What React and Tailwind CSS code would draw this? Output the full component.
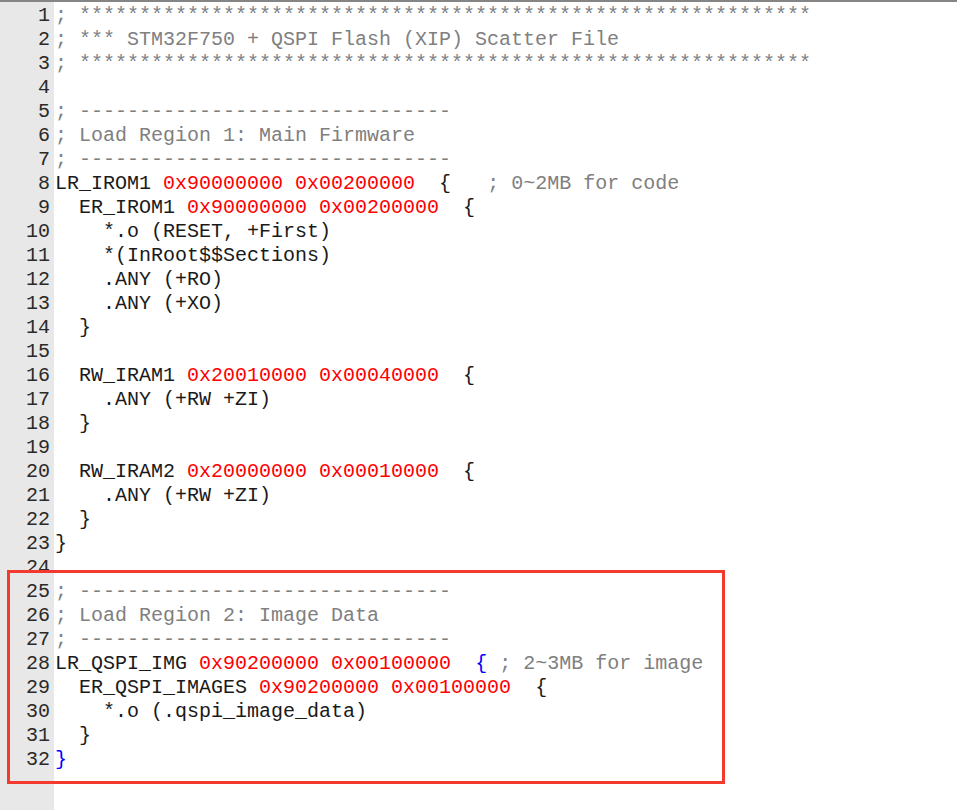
import React from 'react';

const dashes = '; ' + '-'.repeat(31);
const stars = '; ' + '*'.repeat(61);

// t = plain, c = comment, n = number, b = matched brace
const lines = [
  [['c', stars]],
  [['c', '; *** STM32F750 + QSPI Flash (XIP) Scatter File']],
  [['c', stars]],
  [],
  [['c', dashes]],
  [['c', '; Load Region 1: Main Firmware']],
  [['c', dashes]],
  [['t', 'LR_IROM1 '], ['n', '0x90000000'], ['t', ' '], ['n', '0x00200000'], ['t', '  {   '], ['c', '; 0~2MB for code']],
  [['t', '  ER_IROM1 '], ['n', '0x90000000'], ['t', ' '], ['n', '0x00200000'], ['t', '  {']],
  [['t', '    *.o (RESET, +First)']],
  [['t', '    *(InRoot$$Sections)']],
  [['t', '    .ANY (+RO)']],
  [['t', '    .ANY (+XO)']],
  [['t', '  }']],
  [],
  [['t', '  RW_IRAM1 '], ['n', '0x20010000'], ['t', ' '], ['n', '0x00040000'], ['t', '  {']],
  [['t', '    .ANY (+RW +ZI)']],
  [['t', '  }']],
  [],
  [['t', '  RW_IRAM2 '], ['n', '0x20000000'], ['t', ' '], ['n', '0x00010000'], ['t', '  {']],
  [['t', '    .ANY (+RW +ZI)']],
  [['t', '  }']],
  [['t', '}']],
  [],
  [['c', dashes]],
  [['c', '; Load Region 2: Image Data']],
  [['c', dashes]],
  [['t', 'LR_QSPI_IMG '], ['n', '0x90200000'], ['t', ' '], ['n', '0x00100000'], ['t', '  '], ['b', '{'], ['t', ' '], ['c', '; 2~3MB for image']],
  [['t', '  ER_QSPI_IMAGES '], ['n', '0x90200000'], ['t', ' '], ['n', '0x00100000'], ['t', '  {']],
  [['t', '    *.o (.qspi_image_data)']],
  [['t', '  }']],
  [['b', '}']],
];

const tone = {
  t: 'text-[#1a1a1a]',
  c: 'text-[#808080]',
  n: 'text-[#ff0000]',
  b: 'text-[#0000ff]',
};

export default function App() {
  return (
    <div className="relative h-screen w-full overflow-hidden bg-white border-t-2 border-[#858585] font-['Liberation_Mono','Courier_New',monospace] text-[20px] leading-[24px]">
      <div className="flex h-full">
        {/* gutter */}
        <div className="w-[54px] shrink-0 bg-[#e8e8e8] pt-[2px] pr-[4px] text-right text-[#2a2a2a]">
          {lines.map((_, i) => (
            <div key={i} className="h-[24px]">{i + 1}</div>
          ))}
        </div>

        {/* code */}
        <div className="flex-1 pt-[2px] pl-[1px]">
          {lines.map((toks, i) => (
            <div key={i} className="h-[24px] whitespace-pre">
              {toks.map(([k, s], j) => (
                <span key={j} className={tone[k]}>{s}</span>
              ))}
            </div>
          ))}
        </div>
      </div>

      {/* highlight box */}
      <div className="absolute left-[7px] top-[568px] h-[214px] w-[718px] border-[3px] border-[#f33a2f]" />
    </div>
  );
}
